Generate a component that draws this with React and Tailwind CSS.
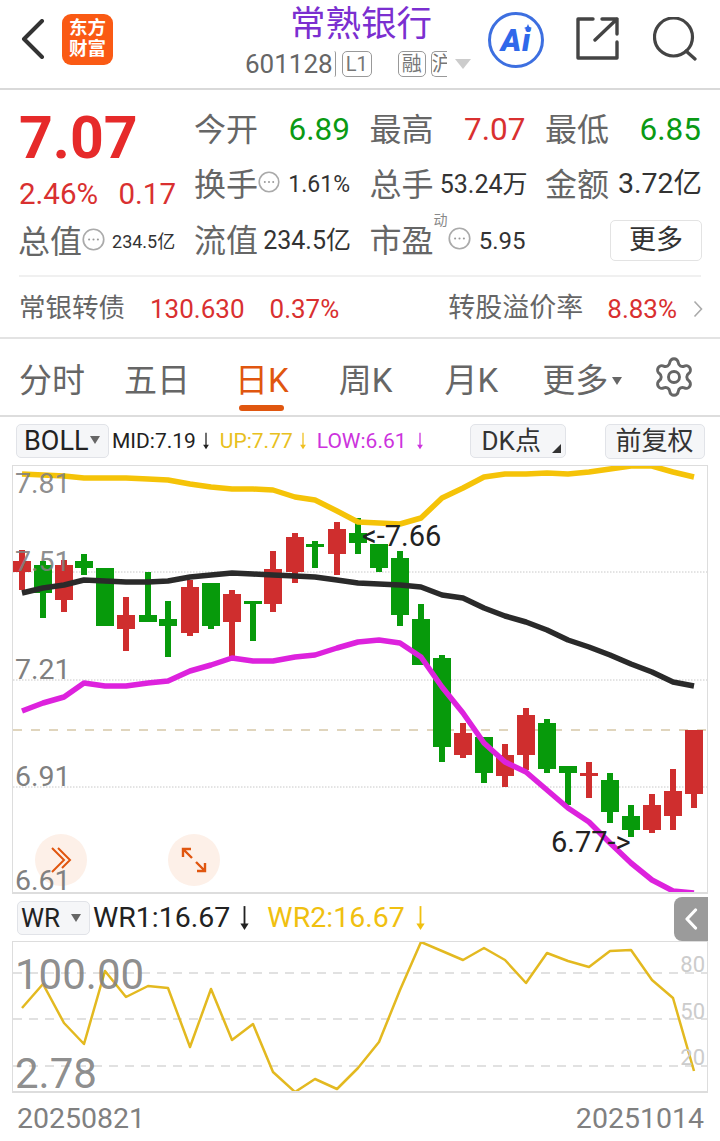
import { Settings } from "lucide-react";

// [wickTop, bodyTop, bodyBottom, wickBottom, up]
const candles = [
  [550, 561, 572, 590, 1], [561, 565, 593, 618, 0], [560, 565, 600, 612, 1], [554, 561, 568, 575, 0],
  [568, 568, 626, 626, 0], [597, 615, 629, 651, 1], [572, 615, 622, 622, 0], [601, 619, 626, 657, 0],
  [580, 587, 633, 636, 1], [583, 583, 626, 629, 0], [590, 594, 622, 657, 1], [601, 601, 604, 641, 0],
  [551, 569, 604, 612, 1], [533, 537, 572, 583, 1], [541, 544, 547, 568, 0], [522, 529, 554, 575, 1],
  [518, 533, 543, 554, 0], [544, 544, 568, 572, 0], [551, 558, 615, 626, 0], [604, 619, 665, 665, 0],
  [655, 658, 747, 762, 0], [723, 733, 755, 758, 1], [737, 737, 773, 783, 0], [744, 755, 776, 787, 1],
  [708, 715, 755, 770, 1], [719, 723, 769, 773, 0], [766, 766, 773, 805, 0], [762, 773, 776, 798, 1],
  [773, 780, 812, 823, 0], [805, 816, 830, 837, 0], [794, 805, 830, 833, 1], [769, 791, 816, 830, 1],
  [730, 730, 794, 808, 1],
];

const xs = [22, 43, 64, 84, 105, 126, 148, 168, 190, 211, 232, 253, 273, 295, 315, 337, 358, 379, 400, 421, 442, 463, 484, 505, 526, 547, 568, 589, 610, 631, 652, 673, 694];

const upLine = [474, 475, 476, 478, 478, 478, 479, 480, 484, 487, 489, 489, 490, 497, 500, 511, 522, 523, 524, 518, 498, 488, 477, 474, 474, 473, 474, 472, 469, 466, 466, 472, 477];
const midLine = [593, 588, 585, 580, 581, 582, 582, 581, 577, 575, 573, 574, 575, 576, 577, 580, 583, 584, 585, 587, 595, 598, 608, 616, 622, 630, 640, 647, 655, 664, 672, 682, 686];
const lowLine = [711, 703, 697, 683, 686, 686, 683, 681, 671, 665, 658, 661, 661, 657, 655, 648, 642, 640, 643, 657, 687, 713, 743, 762, 772, 790, 808, 822, 843, 863, 880, 891, 893];
const wrLine = [1008, 984, 1023, 1044, 971, 997, 986, 988, 1047, 989, 1040, 1024, 1072, 1092, 1079, 1089, 1068, 1042, 990, 942, 951, 960, 948, 960, 983, 953, 961, 967, 951, 950, 980, 998, 1071];

const toPoints = (ys) => ys.map((y, i) => `${xs[i]},${y}`).join(" ");

const DotsIcon = ({ className }) => (
  <svg viewBox="0 0 22 22" className={className}>
    <circle cx="11" cy="11" r="9.8" fill="none" stroke="#aaa" strokeWidth="1.6" />
    <circle cx="6.8" cy="11" r="1" fill="#999" />
    <circle cx="11" cy="11" r="1" fill="#999" />
    <circle cx="15.2" cy="11" r="1" fill="#999" />
  </svg>
);

const DownArrow = ({ className, color }) => (
  <svg viewBox="0 0 12 28" className={className}>
    <path d="M6 1V25" stroke={color} strokeWidth="2" fill="none" />
    <path d="M1.5 20H10.5L6 27Z" fill={color} />
  </svg>
);

const Stat = ({ label, value, color = "text-[#0a9a14]" }) => (
  <div className="flex justify-between items-center w-[156px]">
    <span className="text-[32px] text-[#666]">{label}</span>
    <span className={`text-[31.5px] ${color}`}>{value}</span>
  </div>
);

const Tab = ({ children, active }) => (
  <div className="relative flex items-center justify-center h-full pt-[7px]">
    <span className={`text-[33px] ${active ? "text-[#e0560f]" : "text-[#666]"}`}>{children}</span>
    {active && <div className="absolute left-[4px] right-[5px] bottom-[4px] h-[6px] rounded-full bg-[#e0560f]"></div>}
  </div>
);

const Badge = ({ children, className }) => (
  <div className={`h-[26px] border border-[#999] rounded-[5px] flex items-center justify-center text-[20px] text-[#777] overflow-hidden ${className}`}>
    {children}
  </div>
);

const App = () => {
  return (
    <div className="w-[720px] h-[1141px] bg-white overflow-hidden font-[Roboto,'Noto_Sans_CJK_SC',sans-serif] leading-none">
      {/* Header */}
      <div className="flex h-[90px] border-b-2 border-[#d9d9d9]">
        <div className="w-[241px] flex items-center pl-[21px] pb-[10px]">
          <svg viewBox="0 0 24 40" className="w-[24px] h-[40px]">
            <path d="M21 2L3 20L21 38" fill="none" stroke="#333" strokeWidth="4" strokeLinecap="round" strokeLinejoin="round" />
          </svg>
          <div className="ml-[17px] w-[51px] h-[51px] rounded-[9px] bg-[#fa5a14] flex flex-col items-center justify-center text-white font-bold text-[18.5px] leading-[21px]">
            <span>东方</span>
            <span>财富</span>
          </div>
        </div>
        <div className="w-[240px] flex flex-col">
          <div className="text-center text-[35.5px] text-[#7b2fd0] mt-[7px] h-[38px]">常熟银行</div>
          <div className="flex items-center mt-[6px] pl-[4px]">
            <span className="text-[26px] text-[#666]">601128</span>
            <div className="w-[2px] h-[26px] ml-[1px] border-r border-[#999] rounded-r-[3px]"></div>
            <Badge className="ml-[6px] w-[30px]">L1</Badge>
            <Badge className="ml-[26px] w-[28px]">融</Badge>
            <Badge className="ml-[5px] w-[16px] border-r-0 rounded-r-none justify-start">沪</Badge>
            <div className="ml-[8px] w-0 h-0 border-x-[8px] border-x-transparent border-t-[10px] border-t-[#ccc]"></div>
          </div>
        </div>
        <div className="flex items-start pt-[12px] pl-[7px]">
          <div className="relative w-[56px] h-[56px] rounded-full border-[3px] border-[#3d6fe0] flex items-center justify-center">
            <span className="text-[31px] font-black italic text-[#2f68ea] tracking-[1px]">Ai</span>
            <svg viewBox="0 0 10 10" className="absolute right-[9px] top-[9px] w-[8px] h-[8px]">
              <path d="M5 0L6.5 3.5L10 5L6.5 6.5L5 10L3.5 6.5L0 5L3.5 3.5Z" fill="#2f68ea" />
            </svg>
          </div>
          <svg viewBox="0 0 44 44" className="ml-[31px] mt-[5px] w-[44px] h-[44px]">
            <path d="M18 2H3V41H42V25" fill="none" stroke="#444" strokeWidth="3.4" strokeLinejoin="round" strokeLinecap="round" />
            <path d="M20 23L42 2M27 2H42V17" fill="none" stroke="#444" strokeWidth="3.4" strokeLinejoin="round" strokeLinecap="round" />
          </svg>
          <svg viewBox="0 0 44 44" className="ml-[34px] mt-[5px] w-[44px] h-[44px]">
            <circle cx="20.5" cy="20" r="19" fill="none" stroke="#444" strokeWidth="3.2" />
            <path d="M33 34L42 42" fill="none" stroke="#444" strokeWidth="3.2" strokeLinecap="round" />
          </svg>
        </div>
      </div>

      {/* Quote */}
      <div className="h-[187px] mx-[19px] flex border-b-2 border-[#f0f0f0]">
        <div className="w-[176px] flex flex-col">
          <div className="text-[59px] font-bold text-[#e62a2a] h-[74px] pt-[18px]">7.07</div>
          <div className="flex items-center justify-between w-[157px] text-[29.5px] text-[#d93030] mt-[16px]">
            <span>2.46%</span>
            <span>0.17</span>
          </div>
          <div className="flex items-center h-[40px] mt-[12px] ml-[-1px]">
            <span className="text-[32px] text-[#666]">总值</span>
            <DotsIcon className="w-[23px] h-[23px] mb-[5px]" />
            <span className="ml-[7px] text-[18px] text-[#333]">234.5亿</span>
          </div>
        </div>
        <div className="flex-1 grid grid-cols-[156px_156px_156px] gap-x-[19.5px] grid-rows-[55px_55px_57px] pt-[12px]">
          <Stat label="今开" value="6.89" />
          <Stat label="最高" value="7.07" color="text-[#d93030]" />
          <Stat label="最低" value="6.85" />

          <div className="flex items-center w-[156px]">
            <span className="text-[32px] text-[#666]">换手</span>
            <DotsIcon className="w-[22px] h-[22px] mb-[5px]" />
            <span className="ml-auto text-[23px] text-[#333]">1.61%</span>
          </div>
          <div className="flex items-center justify-between w-[156px]">
            <span className="text-[32px] text-[#666]">总手</span>
            <span className="text-[25px] text-[#333] mr-[-2px]">53.24万</span>
          </div>
          <div className="flex items-center justify-between w-[156px]">
            <span className="text-[32px] text-[#666]">金额</span>
            <span className="text-[28.5px] text-[#333] mr-[-1px]">3.72亿</span>
          </div>

          <div className="flex items-center justify-between w-[156px]">
            <span className="text-[32px] text-[#666]">流值</span>
            <span className="text-[25px] text-[#333] mr-[-1px]">234.5亿</span>
          </div>
          <div className="flex items-center w-[156px]">
            <span className="relative text-[32px] text-[#666]">
              市盈
              <span className="absolute left-[64px] top-[-12px] text-[14px] text-[#888]">动</span>
            </span>
            <DotsIcon className="ml-[14px] w-[23px] h-[23px] mb-[5px]" />
            <span className="ml-auto text-[24px] text-[#333]">5.95</span>
          </div>
          <div className="flex items-center justify-end w-[156px]">
            <button className="w-[92px] h-[41px] mr-[-1px] border border-[#e3e3e3] rounded-[5px] text-[27px] text-[#333]">更多</button>
          </div>
        </div>
      </div>

      {/* Convertible bond row */}
      <div className="h-[62px] flex items-center pl-[19px] pt-[3px] border-b-2 border-[#e3e3e3]">
        <span className="text-[26.5px] text-[#666]">常银转债</span>
        <span className="ml-[25px] text-[26px] text-[#d93030]">130.630</span>
        <span className="ml-[25px] text-[26px] text-[#d93030]">0.37%</span>
        <span className="ml-[109px] text-[27px] text-[#666]">转股溢价率</span>
        <span className="ml-[24px] text-[26px] text-[#d93030]">8.83%</span>
        <svg viewBox="0 0 10 18" className="ml-[16px] w-[10px] h-[18px]">
          <path d="M1.5 1.5L8.5 9L1.5 16.5" fill="none" stroke="#aaa" strokeWidth="1.6" />
        </svg>
      </div>

      {/* Period tabs */}
      <div className="h-[78px] flex pl-[19px] border-b-2 border-[#ddd]">
        <Tab>分时</Tab>
        <div className="ml-[39px]"><Tab>五日</Tab></div>
        <div className="ml-[45px]"><Tab active>日K</Tab></div>
        <div className="ml-[50px]"><Tab>周K</Tab></div>
        <div className="ml-[52px]"><Tab>月K</Tab></div>
        <div className="ml-[44px] flex items-center pt-[7px]">
          <span className="text-[33px] text-[#666]">更多</span>
          <div className="ml-[4px] w-0 h-0 border-x-[5.5px] border-x-transparent border-t-[8px] border-t-[#666]"></div>
        </div>
        <div className="ml-[30px] flex items-center">
          <Settings size={44} strokeWidth={1.6} color="#666" />
        </div>
      </div>

      {/* BOLL toolbar */}
      <div className="h-[48px] flex items-center pl-[16px]">
        <div className="w-[93px] h-[34px] border border-[#e1e3e8] rounded-[5px] bg-[#f5f6f8] flex items-center pl-[7px]">
          <span className="text-[27px] text-[#222]">BOLL</span>
          <div className="ml-[2px] mb-[3px] w-0 h-0 border-x-[5.5px] border-x-transparent border-t-[8px] border-t-[#666]"></div>
        </div>
        <span className="ml-[3px] text-[21px] text-[#222]">MID:7.19</span>
        <DownArrow className="ml-[6px] w-[8px] h-[18px]" color="#222" />
        <span className="ml-[10px] text-[21px] text-[#e8c020]">UP:7.77</span>
        <DownArrow className="ml-[6px] w-[8px] h-[18px]" color="#f0c020" />
        <span className="ml-[10px] text-[21px] text-[#cc33dd]">LOW:6.61</span>
        <DownArrow className="ml-[9px] w-[8px] h-[18px]" color="#cc33dd" />
        <div className="relative ml-[46px] w-[96px] h-[34px] border border-[#e1e3e8] rounded-[5px] bg-[#f5f6f8] flex items-center pl-[11px]">
          <span className="text-[26px] text-[#333]">DK点</span>
          <div className="absolute right-[4px] bottom-[4px] w-0 h-0 border-l-[9px] border-l-transparent border-b-[9px] border-b-[#333]"></div>
        </div>
        <div className="ml-[39px] w-[100px] h-[35px] border border-[#e1e3e8] rounded-[5px] bg-[#f5f6f8] flex items-center justify-center">
          <span className="text-[26px] text-[#333]">前复权</span>
        </div>
      </div>

      {/* Candlestick chart */}
      <div className="relative ml-[12px] w-[696px] h-[429px] border border-[#ddd] border-b-2">
        <svg viewBox="13 466 694 426" className="block w-[694px] h-[426px]">
          <path d="M13 572H707M13 680H707M13 787H707" stroke="#c8c8c8" strokeWidth="1" strokeDasharray="1.5 1.5" fill="none" />
          <path d="M13 730H707" stroke="#d6c7a8" strokeWidth="1.5" strokeDasharray="9 9" fill="none" />
          {candles.map(([top, bodyTop, bodyBottom, bottom, up], i) => (
            <g key={i} fill={up ? "#cf2e2e" : "#079a0b"}>
              <rect x={xs[i] - 3} y={top} width="6" height={bottom - top} />
              <rect x={xs[i] - 9} y={bodyTop} width="18" height={bodyBottom - bodyTop} />
            </g>
          ))}
          <polyline points={toPoints(upLine)} fill="none" stroke="#f5c308" strokeWidth="5.5" strokeLinejoin="round" />
          <polyline points={toPoints(midLine)} fill="none" stroke="#2a2a2a" strokeWidth="5.5" strokeLinejoin="round" />
          <polyline points={toPoints(lowLine)} fill="none" stroke="#dd22dd" strokeWidth="5.5" strokeLinejoin="round" />
        </svg>
        <div className="absolute left-[22px] top-[368px] w-[52px] h-[52px] rounded-full bg-[#fdf0e8] flex items-center justify-center">
          <svg viewBox="0 0 22 26" className="w-[22px] h-[26px]">
            <path d="M2 1L14 13L2 25M8 1L20 13L12 21" fill="none" stroke="#e0560f" strokeWidth="2" />
          </svg>
        </div>
        <div className="absolute left-[155px] top-[368px] w-[52px] h-[52px] rounded-full bg-[#fdf0e8] flex items-center justify-center">
          <svg viewBox="0 0 26 26" className="w-[26px] h-[26px]">
            <path d="M2 10V2H10M2 2L11 11M24 16V24H16M24 24L15 15" fill="none" stroke="#e0560f" strokeWidth="2.4" />
          </svg>
        </div>
        <span className="absolute left-[2px] top-[4px] text-[28.5px] text-[#808080]/90">7.81</span>
        <span className="absolute left-[2px] top-[82px] text-[28.5px] text-[#808080]/90">7.51</span>
        <span className="absolute left-[2px] top-[190px] text-[28.5px] text-[#808080]">7.21</span>
        <span className="absolute left-[2px] top-[297px] text-[28.5px] text-[#808080]">6.91</span>
        <span className="absolute left-[2px] top-[401px] text-[28.5px] text-[#808080]">6.61</span>
        <span className="absolute left-[349px] top-[56px] text-[29px] text-[#222]">&lt;-7.66</span>
        <span className="absolute left-[538px] top-[362px] text-[29px] text-[#222]">6.77-&gt;</span>
      </div>

      {/* WR toolbar */}
      <div className="relative h-[47px] flex items-center pl-[17px] pt-[1px]">
        <div className="w-[73px] h-[34px] border border-[#e1e3e8] rounded-[5px] bg-[#f5f6f8] flex items-center pl-[3px]">
          <span className="text-[26px] text-[#222]">WR</span>
          <div className="ml-[11px] w-0 h-0 border-x-[5.5px] border-x-transparent border-t-[8px] border-t-[#666]"></div>
        </div>
        <span className="ml-[3px] text-[28.5px] text-[#222]">WR1:16.67</span>
        <DownArrow className="ml-[9px] w-[11px] h-[26px]" color="#222" />
        <span className="ml-[17px] text-[28.5px] text-[#f0c010]">WR2:16.67</span>
        <DownArrow className="ml-[10px] w-[11px] h-[26px]" color="#f0c010" />
        <div className="absolute left-[674px] top-[3px] w-[34px] h-[44px] bg-[#9b9b9b] rounded-l-[8px] flex items-center justify-center">
          <svg viewBox="0 0 14 22" className="w-[14px] h-[22px]">
            <path d="M11.5 2L3 11L11.5 20" fill="none" stroke="white" strokeWidth="3.2" strokeLinecap="round" strokeLinejoin="round" />
          </svg>
        </div>
      </div>

      {/* WR chart */}
      <div className="relative ml-[12px] w-[696px] h-[152px] border border-[#ddd] border-b-2">
        <svg viewBox="13 942 694 149" className="block w-[694px] h-[149px]">
          <path d="M13 973H707M13 1019H707M13 1066H707" stroke="#d8d8d8" strokeWidth="1.5" strokeDasharray="9 7" fill="none" />
          <polyline points={toPoints(wrLine)} fill="none" stroke="#e3b920" strokeWidth="2.5" strokeLinejoin="round" />
        </svg>
        <span className="absolute left-[2px] top-[12px] text-[42px] text-[#808080]/90">100.00</span>
        <span className="absolute left-[2px] top-[111px] text-[42px] text-[#808080]/90">2.78</span>
        <span className="absolute right-[2px] top-[12px] text-[22px] text-[#ccc]">80</span>
        <span className="absolute right-[2px] top-[59px] text-[22px] text-[#ccc]">50</span>
        <span className="absolute right-[2px] top-[105px] text-[22px] text-[#ccc]">20</span>
      </div>

      {/* Dates */}
      <div className="flex justify-between pl-[17px] pr-[16px] pt-[12px] text-[28.5px] text-[#808080]">
        <span>20250821</span>
        <span>20251014</span>
      </div>
    </div>
  );
};

export default App;
